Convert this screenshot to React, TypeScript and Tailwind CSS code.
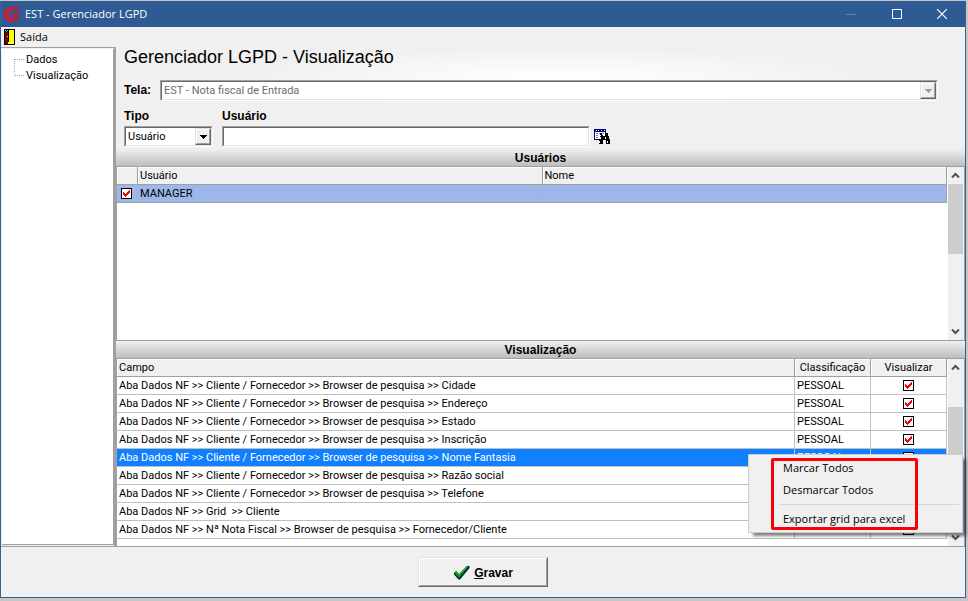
import { useState } from "react";

const fields = [
  "Cliente / Fornecedor >> Browser de pesquisa >> Cidade",
  "Cliente / Fornecedor >> Browser de pesquisa >> Endereço",
  "Cliente / Fornecedor >> Browser de pesquisa >> Estado",
  "Cliente / Fornecedor >> Browser de pesquisa >> Inscrição",
  "Cliente / Fornecedor >> Browser de pesquisa >> Nome Fantasia",
  "Cliente / Fornecedor >> Browser de pesquisa >> Razão social",
  "Cliente / Fornecedor >> Browser de pesquisa >> Telefone",
  "Grid  >> Cliente",
  "Nª Nota Fiscal >> Browser de pesquisa >> Fornecedor/Cliente",
];

const sunken =
  "border border-t-[#a0a0a0] border-l-[#a0a0a0] border-r-white border-b-white";
const sunkenInner =
  "border border-t-[#696969] border-l-[#696969] border-r-[#e3e3e3] border-b-[#e3e3e3]";
const raised =
  "border border-t-[#e3e3e3] border-l-[#e3e3e3] border-r-[#696969] border-b-[#696969]";
const raisedInner =
  "border border-t-white border-l-white border-r-[#a0a0a0] border-b-[#a0a0a0]";
const headCell =
  "border-r border-b border-[#a0a0a0] bg-[#f0f0f0] p-0 pt-px font-normal shadow-[inset_1px_1px_0_#fff]";

function Tick({ label }: { label: string }) {
  const [on, setOn] = useState(true);
  return (
    <label className="relative mx-auto block size-[11px]">
      <input
        type="checkbox"
        aria-label={label}
        checked={on}
        onChange={() => setOn(!on)}
        className="block size-[11px] appearance-none border border-black bg-white"
      />
      {on && (
        <svg viewBox="0 0 11 11" className="pointer-events-none absolute inset-0 size-[11px]" shapeRendering="crispEdges">
          <path
            fill="#f00"
            d="M2 4h1v3h-1zM3 5h1v3h-1zM4 6h1v3h-1zM5 5h1v3h-1zM6 4h1v3h-1zM7 3h1v3h-1zM8 2h1v3h-1z"
          />
        </svg>
      )}
    </label>
  );
}

function Combo({ id, value, disabled }: { id: string; value: string; disabled?: boolean }) {
  return (
    <div className={`w-full ${sunken}`}>
      <div className={`relative bg-white ${sunkenInner}`}>
        <select
          id={id}
          disabled={disabled}
          defaultValue={value}
          className="block h-[17px] w-full appearance-none bg-white pt-px pl-[2px] font-[Roboto,sans-serif] text-[11px] leading-4 text-black opacity-100 disabled:text-[#6d6d6d]"
        >
          <option>{value}</option>
        </select>
        <span className={`pointer-events-none absolute inset-y-0 right-0 w-4 ${raised}`}>
          <span className={`flex size-full items-center justify-center bg-[#f0f0f0] ${raisedInner}`}>
            <svg width="7" height="4" shapeRendering="crispEdges">
              <path d="M0 0h7v1h-7zM1 1h5v1h-5zM2 2h3v1h-3zM3 3h1v1h-1z" fill={disabled ? "#a0a0a0" : "#000"} />
            </svg>
          </span>
        </span>
      </div>
    </div>
  );
}

function Chevron({ down }: { down?: boolean }) {
  return (
    <svg width="9" height="7" viewBox="0 0 9 7" className={down ? "rotate-180" : ""}>
      <path d="M1 5.5 4.5 2 8 5.5" fill="none" stroke="#505050" strokeWidth="2" />
    </svg>
  );
}

function ScrollBar({ before, thumb }: { before: string; thumb: string }) {
  return (
    <div className="ml-px flex w-[17px] shrink-0 flex-col border-r border-[#a0a0a0] bg-[#f0f0f0] pr-px">
      <button aria-label="Rolar para cima" className="flex h-[17px] items-center justify-center">
        <Chevron />
      </button>
      <div className="flex-1">
        <div className={before} />
        <div className={`bg-[#cdcdcd] ${thumb}`} />
      </div>
      <button aria-label="Rolar para baixo" className="flex h-[17px] items-center justify-center">
        <Chevron down />
      </button>
    </div>
  );
}

function Band({ children }: { children: string }) {
  return (
    <h2 className="h-[17px] shrink-0 bg-linear-to-b from-[#f0f0f0] to-[#bdbdbd] text-center text-[12px] leading-[18px] font-bold">
      {children}
    </h2>
  );
}

function TitleBar() {
  return (
    <header className="flex h-[26px] shrink-0 items-center bg-[#2e5b93] pl-[3px] font-['Open_Sans','Noto_Sans',sans-serif] text-white">
      <svg width="16" height="16" viewBox="0 0 16 16">
        <defs>
          <linearGradient id="logo" x1="0" y1="0" x2="1" y2="0">
            <stop offset="0" stopColor="#c8203c" />
            <stop offset="1" stopColor="#a02444" />
          </linearGradient>
        </defs>
        <path
          fill="url(#logo)"
          d="M16 .5 14.500 4H9C6.500 4 5 5.800 5 8c0 2 1.200 3.200 3 3.200 1.200 0 2-.5 2.400-1.500H7.800L9.200 6.500h6.300l-1.700 7.300C12.300 15.300 10.200 16 7.800 16 3 16 0 12.800 0 8.500 0 4 3.200.5 8 .5z"
        />
      </svg>
      <h1 className="ml-[5px] flex-1 text-[11px] leading-4">EST - Gerenciador LGPD</h1>
      <button aria-label="Minimizar" className="flex h-full w-[46px] items-center justify-center">
        <svg width="10" height="10"><path d="M0 5.500h10" stroke="#6484ae" /></svg>
      </button>
      <button aria-label="Maximizar" className="flex h-full w-[45px] items-center justify-center">
        <svg width="10" height="10"><path d="M.5.5h9v9h-9z" fill="none" stroke="#fff" /></svg>
      </button>
      <button aria-label="Fechar" className="flex h-full w-[46px] items-center justify-center">
        <svg width="10" height="10"><path d="M0 0 10 10M10 0 0 10" stroke="#fff" strokeWidth="1.200" /></svg>
      </button>
    </header>
  );
}

function Tree() {
  return (
    <aside className="w-[115px] shrink-0 border-t border-r-2 border-b border-[#a0a0a0] p-px pr-0">
      <nav className="flex h-full border-r border-b border-[#a0a0a0] bg-white pt-[2px] pl-3">
        <svg width="10" height="32" className="shrink-0">
          <path d="M.5 8v17M1 8.500h9M1 24.500h9" stroke="#a8a8a8" strokeDasharray="1 1" fill="none" />
        </svg>
        <ul className="pt-px pl-[2px] font-[Roboto,sans-serif] text-[11px] leading-4">
          <li><a href="#dados">Dados</a></li>
          <li><a href="#visualizacao">Visualização</a></li>
        </ul>
      </nav>
    </aside>
  );
}

function Filters() {
  return (
    <section className="h-[102px] shrink-0 bg-[radial-gradient(ellipse_320px_30px_at_52%_30px,#ffffff,#f0f0f0)] pl-2">
      <h2 className="text-[18px] leading-5 font-normal">Gerenciador LGPD - Visualização</h2>
      <div className="mt-[13px] mr-[27px] flex items-center gap-2">
        <label htmlFor="tela" className="w-7 shrink-0 pb-[2px] text-[12px] leading-4 font-bold">Tela:</label>
        <Combo id="tela" value="EST - Nota fiscal de Entrada" disabled />
      </div>
      <div className="mt-[7px] flex items-end">
        <div className="w-[89px]">
          <label htmlFor="tipo" className="mb-[2px] block text-[12px] leading-4 font-bold">Tipo</label>
          <Combo id="tipo" value="Usuário" />
        </div>
        <div className="mr-[375px] ml-[9px] flex-1">
          <label htmlFor="usuario" className="mb-[2px] block text-[12px] leading-4 font-bold">Usuário</label>
          <div className="flex items-center">
            <div className={`flex-1 ${sunken}`}>
              <input id="usuario" className={`block h-[19px] w-full bg-white px-1 text-[11px] outline-none ${sunkenInner}`} />
            </div>
            <button aria-label="Pesquisar usuário" className="-mr-5 ml-1">
              <svg width="16" height="16" viewBox="0 0 16 16" shapeRendering="crispEdges">
                <path fill="#000080" d="M0 0h12v11h-12z" />
                <path fill="#fff" d="M1 3h10v7h-10zM2 1h1v1h-1zM4 1h1v1h-1zM7 1h1v1h-1zM10 1h1v1h-1z" />
                <path fill="#808080" d="M2 4h2v1h-2zM5 4h2v1h-2zM8 4h2v1h-2zM2 6h2v1h-2zM2 8h2v1h-2z" />
                <path fill="#000" d="M6 4h2v2h1v1h2v-1h1v-2h2v3h1v3h1v5h-4v-4h-3v4h-4v-5h1v-3h1z" />
                <path fill="#fff" d="M6 8h1v2h-1zM11 8h1v2h-1zM5 12h1v2h-1zM13 12h1v2h-1z" />
              </svg>
            </button>
          </div>
        </div>
      </div>
    </section>
  );
}

function Users() {
  return (
    <div className="flex min-h-0 flex-1 border-y border-l border-[#a0a0a0] bg-white">
      <div className="min-w-0 flex-1">
        <table className="w-full table-fixed border-separate border-spacing-0 text-left font-[Roboto,sans-serif] text-[11px] leading-4">
          <thead>
            <tr className="h-[18px]">
              <th className={`w-[21px] ${headCell}`} />
              <th className={headCell}><span className="pl-[2px]">Usuário</span></th>
              <th className={headCell}><span className="pl-[2px]">Nome</span></th>
            </tr>
          </thead>
          <tbody>
            <tr className="h-[18px] bg-[#9db7eb]">
              <td className="border-r border-b border-r-[#aab4c8] border-b-[#a0a0a0] p-0 pr-px"><Tick label="MANAGER" /></td>
              <td className="border-r border-b border-r-[#aab4c8] border-b-[#a0a0a0] p-0 pt-px pl-[2px]">MANAGER</td>
              <td className="border-r border-b border-[#a0a0a0] p-0" />
            </tr>
          </tbody>
        </table>
      </div>
      <ScrollBar before="h-0" thumb="h-[70px]" />
    </div>
  );
}

function ContextMenu() {
  const item = "block h-[22px] w-full pl-[34px] text-left";
  return (
    <div
      role="menu"
      className="absolute right-[2px] bottom-[13px] w-[215px] border border-[#cccccc] bg-[#f0f0f0] py-[2px] font-['Open_Sans','Noto_Sans',sans-serif] text-[11px] shadow-[4px_4px_3px_-1px_rgba(0,0,0,0.5)]"
    >
      <button role="menuitem" className={item}>Marcar Todos</button>
      <button role="menuitem" className={item}>Desmarcar Todos</button>
      <hr className="my-[3px] mr-[3px] ml-[30px] border-[#d7d7d7]" />
      <button role="menuitem" className={item}>Exportar grid para excel</button>
      <div className="pointer-events-none absolute top-[3px] bottom-[2px] left-[22px] w-[147px] rounded-[2px] border-3 border-[#fb0007]" />
    </div>
  );
}

function Fields() {
  return (
    <div className="relative flex h-[189px] shrink-0 border-y border-l border-[#a0a0a0] bg-white">
      <div className="min-w-0 flex-1">
        <table className="w-full table-fixed border-separate border-spacing-0 text-left font-[Roboto,sans-serif] text-[11px] leading-4">
          <thead>
            <tr className="h-[18px]">
              <th className={headCell}><span className="pl-[2px]">Campo</span></th>
              <th className={`w-[76px] text-center ${headCell}`}>Classificação</th>
              <th className={`w-[76px] text-center ${headCell}`}>Visualizar</th>
            </tr>
          </thead>
          <tbody>
            {fields.map((field, i) => (
              <tr key={field} className={i === 4 ? "h-[18px] bg-[#1080ff] text-white" : "h-[18px]"}>
                <td className="border-r border-b border-[#c0c0c0] p-0 pt-px pl-[2px] whitespace-pre">{"Aba Dados NF >> " + field}</td>
                <td className="border-r border-b border-[#c0c0c0] p-0 pt-px pl-[2px]">PESSOAL</td>
                <td className="border-r border-b border-[#c0c0c0] p-0"><Tick label={field} /></td>
              </tr>
            ))}
          </tbody>
        </table>
      </div>
      <ScrollBar before="h-[31px]" thumb="h-[77px]" />
      <ContextMenu />
    </div>
  );
}

export default function App() {
  return (
    <div className="h-screen min-h-[500px] bg-[#c6c6c6] pt-px pr-[2px] pb-[3px] font-['Liberation_Sans',Arial,sans-serif] text-black">
      <div className="flex h-full flex-col border-x border-b border-[#34619c] bg-[#f0f0f0]">
        <TitleBar />
        <div className="flex h-5 shrink-0 items-center pl-[3px]">
          <button className="flex items-center gap-[5px] font-['Open_Sans','Noto_Sans',sans-serif] text-[11px] leading-4">
            <svg width="11" height="16" viewBox="0 0 11 16" shapeRendering="crispEdges">
              <path fill="#000" d="M0 0h11v16h-11z" />
              <path fill="#ff0" d="M5 1h5v14h-6v-2h1z" />
              <path fill="#800000" d="M1 3h3v11h-1v1h-2z" />
              <path fill="#0ff" d="M1 1h1v1h-1zM3 1h1v1h-1zM2 2h1v1h-1z" />
              <path fill="#ff0" d="M3 7h1v1h-1z" />
            </svg>
            Saída
          </button>
        </div>
        <div className="flex min-h-0 flex-1">
          <Tree />
          <main className="flex min-w-0 flex-1 flex-col">
            <Filters />
            <Band>Usuários</Band>
            <Users />
            <Band>Visualização</Band>
            <Fields />
          </main>
        </div>
        <footer className="flex h-[50px] shrink-0 items-center justify-center">
          <button className={`w-[130px] ${raised}`}>
            <span className={`flex h-7 items-center justify-center gap-1 pt-[2px] text-[12px] font-bold ${raisedInner}`}>
              <svg width="17" height="16" viewBox="0 0 17 16">
                <path d="M1 8 3.500 6.500 6 9.500 14 1h2.500v2L7 14.500H5.500L1 9.500z" fill="#001858" />
                <path d="M.8 7.500 3.200 6 6 9 14 .8h2L6.500 12.800H5.500z" fill="#088a10" />
                <path d="M1.500 7.500 3 6.800l3 3.400L14.500 1.300" fill="none" stroke="#20d820" strokeWidth=".8" />
              </svg>
              <span><span className="underline">G</span>ravar</span>
            </span>
          </button>
        </footer>
      </div>
    </div>
  );
}
